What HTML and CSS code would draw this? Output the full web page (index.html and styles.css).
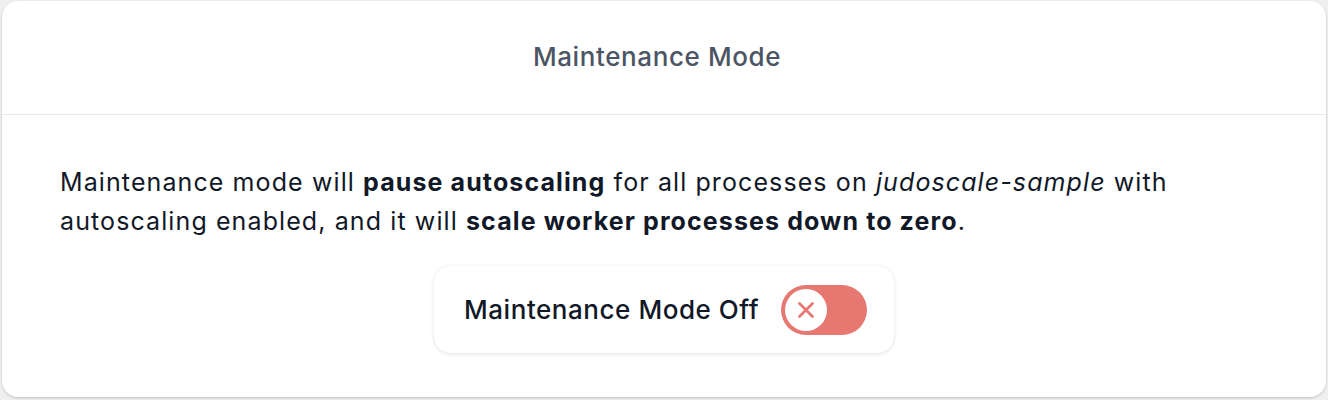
FILE: index.html
```html
<!DOCTYPE html>
<html lang="en">
<head>
<meta charset="utf-8">
<title>Maintenance Mode</title>
<link rel="stylesheet" href="styles.css">
</head>
<body>
<div class="page">
  <section class="card">
    <header class="card-header">
      <h2 class="card-title">Maintenance Mode</h2>
    </header>
    <div class="card-body">
      <p class="desc">Maintenance mode will <strong>pause autoscaling</strong> for all processes on <em>judoscale-sample</em> with autoscaling enabled, and it will <strong>scale worker processes down to zero</strong>.</p>
      <div class="toggle-box">
        <span class="toggle-label">Maintenance Mode Off</span>
        <span class="toggle">
          <span class="knob">
            <svg viewBox="0 0 20 20" width="20" height="20" aria-hidden="true"><path d="M3.5 3.5 L16.5 16.5 M16.5 3.5 L3.5 16.5" stroke="#e77771" stroke-width="2.8" stroke-linecap="round" fill="none"/></svg>
          </span>
        </span>
      </div>
    </div>
  </section>
</div>
</body>
</html>
```
FILE: styles.css
```css
html, body {
  margin: 0;
  padding: 0;
  background: #efeff0;
  font-family: Inter, "Noto Sans", sans-serif;
}
.page {
  padding: 1px 2px 3px 2px;
}
.card {
  background: #ffffff;
  border-radius: 16px;
  height: 396px;
  box-shadow: 0 1px 3px rgba(0,0,0,0.12), 0 1px 2px rgba(0,0,0,0.08);
  overflow: hidden;
}
.card-header {
  height: 114px;
  box-sizing: border-box;
  border-bottom: 1px solid #e6e7ea;
  display: flex;
  align-items: center;
  justify-content: center;
  padding: 0 14px 3px 0;
}
.card-title {
  margin: 0;
  font-size: 26px;
  font-weight: 500;
  letter-spacing: 0.6px;
  color: #4b5563;
}
.card-body {
  padding: 48px 58px 0 58px;
}
.desc {
  margin: 0;
  font-size: 25px;
  line-height: 39px;
  letter-spacing: 1.1px;
  color: #111827;
}
.desc strong { font-weight: 700; }
.toggle-box {
  margin: 25px auto 0;
  width: 460px;
  height: 87px;
  box-sizing: border-box;
  border-radius: 16px;
  background: #fff;
  box-shadow: 0 1px 4px rgba(0,0,0,0.10), 0 0 1px rgba(0,0,0,0.10);
  display: flex;
  align-items: center;
  padding: 0 27px 0 30px;
  justify-content: space-between;
}
.toggle-label {
  font-size: 26px;
  font-weight: 500;
  letter-spacing: 0.55px;
  color: #111827;
}
.toggle {
  width: 86px;
  height: 50px;
  border-radius: 25px;
  background: #e77771;
  display: flex;
  align-items: center;
  padding: 4px;
  box-sizing: border-box;
}
.knob {
  width: 42px;
  height: 42px;
  border-radius: 50%;
  background: #fff;
  display: flex;
  align-items: center;
  justify-content: center;
}
```
